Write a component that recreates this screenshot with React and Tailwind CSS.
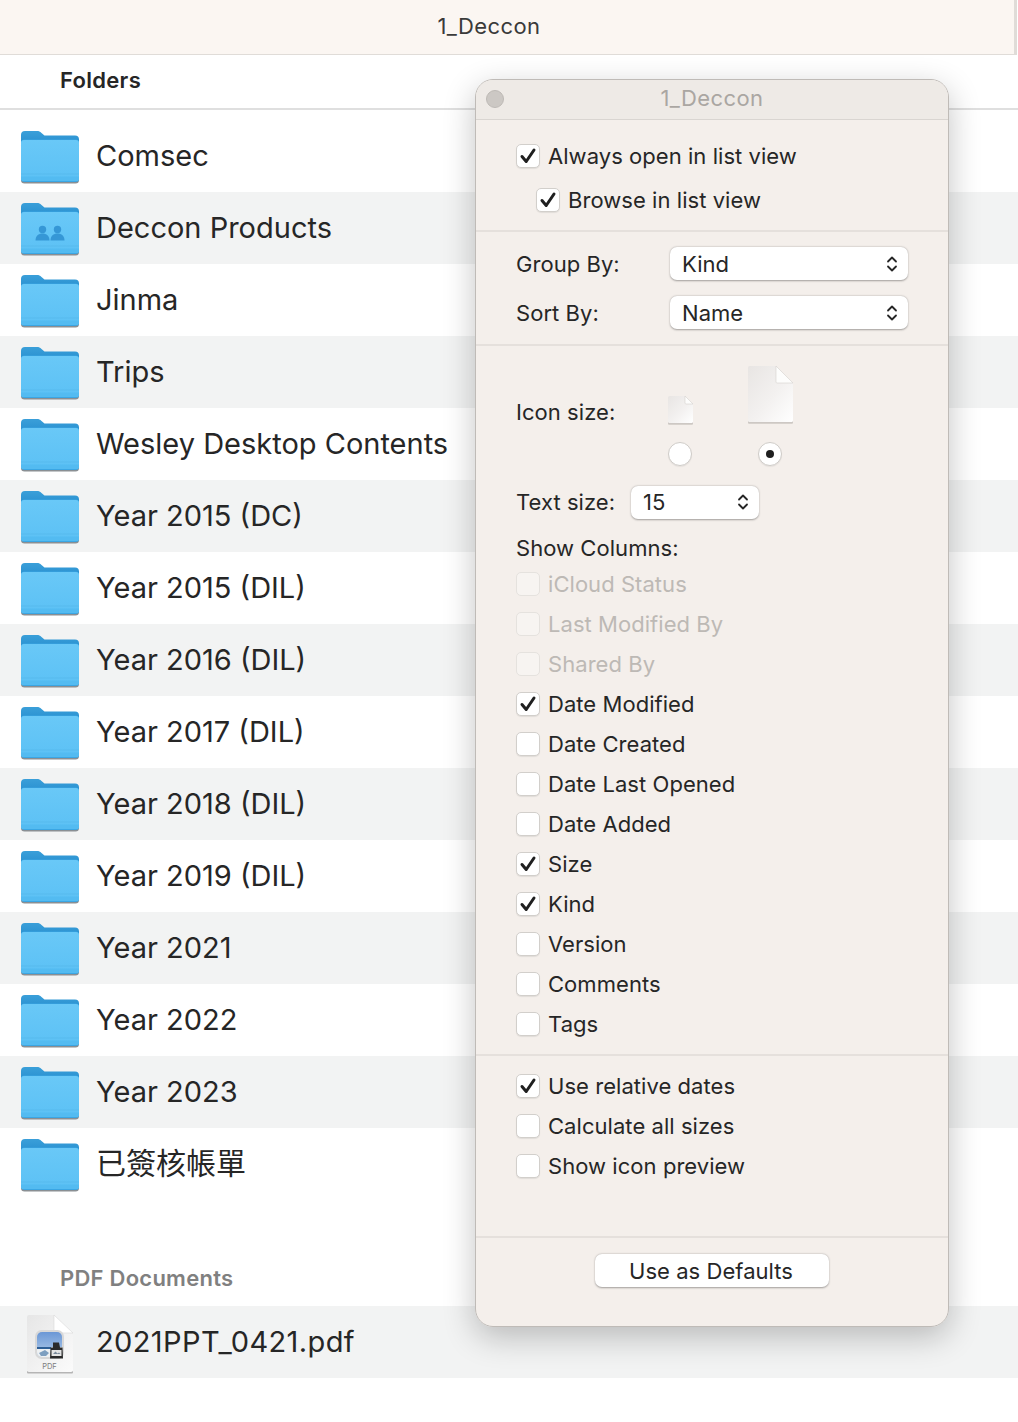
const FONT = "font-['Inter','Noto_Sans_CJK_TC',sans-serif]";

const folders = [
  "Comsec",
  "Deccon Products",
  "Jinma",
  "Trips",
  "Wesley Desktop Contents",
  "Year 2015 (DC)",
  "Year 2015 (DIL)",
  "Year 2016 (DIL)",
  "Year 2017 (DIL)",
  "Year 2018 (DIL)",
  "Year 2019 (DIL)",
  "Year 2021",
  "Year 2022",
  "Year 2023",
  "已簽核帳單",
];

const columns = [
  { label: "iCloud Status", disabled: true },
  { label: "Last Modified By", disabled: true },
  { label: "Shared By", disabled: true },
  { label: "Date Modified", checked: true },
  { label: "Date Created" },
  { label: "Date Last Opened" },
  { label: "Date Added" },
  { label: "Size", checked: true },
  { label: "Kind", checked: true },
  { label: "Version" },
  { label: "Comments" },
  { label: "Tags" },
];

function FolderIcon({ shared }) {
  return (
    <svg width="60" height="56" viewBox="0 0 60 56" className="shrink-0">
      <defs>
        <linearGradient id="foldertab" x1="0" y1="0" x2="0" y2="1">
          <stop offset="0" stopColor="#3a9fd9" />
          <stop offset="1" stopColor="#2189cc" />
        </linearGradient>
        <linearGradient id="folderfront" x1="0" y1="0" x2="0" y2="1">
          <stop offset="0" stopColor="#69c8f7" />
          <stop offset="1" stopColor="#5cc1f5" />
        </linearGradient>
      </defs>
      <path d="M1 5a4 4 0 0 1 4-4h12c2 0 3 .6 4.500 2l3 2.500h30.500a4 4 0 0 1 4 4V20H1z" fill="url(#foldertab)" />
      <rect x="1" y="12" width="58" height="41.500" rx="3.500" fill="#8a8f93" />
      <rect x="1" y="9.500" width="58" height="42.500" rx="3.500" fill="#3aa6e4" />
      <path d="M1 13a3 3 0 0 1 3-3h52a3 3 0 0 1 3 3v35.500a2.500 2.500 0 0 1-2.500 2.500h-53A2.500 2.500 0 0 1 1 48.500z" fill="url(#folderfront)" />
      <rect x="1" y="43.500" width="58" height="1" fill="#52b6ea" opacity="0.5" />
      <path d="M1 46.500h58v2a2.500 2.500 0 0 1-2.500 2.500h-53A2.500 2.500 0 0 1 1 48.500z" fill="#53bbf1" />
      {shared && (
        <g fill="#3597d6">
          <circle cx="22.500" cy="27.500" r="3.700" />
          <circle cx="37.500" cy="27.500" r="3.700" />
          <path d="M15.500 38.500c0-4.500 3-7 7-7s7 2.500 7 7z" />
          <path d="M30.500 38.500c0-4.500 3-7 7-7s7 2.500 7 7z" />
        </g>
      )}
    </svg>
  );
}

function DocShape({ w, h, fold, id }) {
  return (
    <svg width={w + 2} height={h + 3} viewBox={`-1 0 ${w + 2} ${h + 3}`} className="block">
      <defs>
        <linearGradient id={id} x1="0" y1="0" x2="1" y2="1">
          <stop offset="0" stopColor="#e8e5e3" />
          <stop offset="0.55" stopColor="#f3f1f0" />
          <stop offset="1" stopColor="#ffffff" />
        </linearGradient>
      </defs>
      <path d={`M0 ${h - 1}h${w}v1.800a1 1 0 0 1-1 1H1a1 1 0 0 1-1-1z`} fill="#bcb8b4" opacity="0.7" />
      <path
        d={`M1.500 0H${w - fold}L${w} ${fold}V${h - 1.500}a1.500 1.500 0 0 1-1.500 1.500H1.500A1.500 1.500 0 0 1 0 ${h - 1.500}V1.500A1.500 1.500 0 0 1 1.500 0z`}
        fill={`url(#${id})`}
      />
      <path d={`M${w - fold} 0V${fold - 1}a1 1 0 0 0 1 1H${w}z`} fill="#fdfdfc" stroke="#cfcbc7" strokeWidth="0.5" />
    </svg>
  );
}

function PdfIcon() {
  return (
    <svg width="48" height="60" viewBox="0 0 48 60" className="shrink-0">
      <defs>
        <linearGradient id="pdfpage" x1="0" y1="0" x2="1" y2="1">
          <stop offset="0" stopColor="#e6e6e6" />
          <stop offset="1" stopColor="#fbfbfb" />
        </linearGradient>
        <linearGradient id="pdfsky" x1="0" y1="0" x2="0" y2="1">
          <stop offset="0" stopColor="#6a97d6" />
          <stop offset="1" stopColor="#b4cde9" />
        </linearGradient>
      </defs>
      <path d="M1 57h46v1.500a1 1 0 0 1-1 1H2a1 1 0 0 1-1-1z" fill="#b5b5b5" />
      <path d="M3 1h25l19 19v36a2 2 0 0 1-2 2H3a2 2 0 0 1-2-2V3a2 2 0 0 1 2-2z" fill="url(#pdfpage)" />
      <path d="M28 1v15a3 3 0 0 0 3 3h16z" fill="#ffffff" stroke="#d8d8d8" strokeWidth="0.6" />
      <rect x="9" y="16" width="29" height="29" rx="6.500" fill="#d8d8d8" />
      <rect x="11" y="18" width="25" height="25" rx="5" fill="url(#pdfsky)" />
      <path d="M11 33h25v5a5 5 0 0 1-5 5H16a5 5 0 0 1-5-5z" fill="#eef1f3" />
      <path d="M11 33h14v2H11z" fill="#2e5f96" />
      <path d="M13 39l6-3 4 3-3 3h-5z" fill="#7d9fc0" />
      <path d="M27 28.500h6l1 5h2.500l.5 11H24l.5-11H27z" fill="#2a2a2a" />
      <rect x="25.500" y="36" width="10" height="6" fill="#e4e4e4" />
      <path d="M27 40l2.500-2.500 2 2 1.500-1 1.500 1.500z" fill="#7a8a9a" />
      <text x="23.500" y="54.500" textAnchor="middle" fontSize="7.500" fill="#7c7c7c" fontFamily="Inter, sans-serif">PDF</text>
    </svg>
  );
}

function Row({ striped, icon, name, textClass }) {
  return (
    <div className={`flex h-[72px] items-center ${striped ? "bg-[#f2f3f3]" : ""}`}>
      <div className="flex w-[96px] justify-center pl-[4px] pt-[3px]">{icon}</div>
      <span className={`whitespace-nowrap pb-[2px] leading-none text-[#262626] ${textClass}`}>{name}</span>
    </div>
  );
}

function Checkbox({ label, checked, disabled }) {
  return (
    <div className="flex h-10 items-center gap-2">
      <div
        className={`flex h-6 w-6 items-center justify-center rounded-[5px] border ${
          disabled ? "border-[#e5e2de] bg-[#f7f4f1]" : "border-[#d2cfcb] bg-white shadow-[0_1px_1px_rgba(0,0,0,0.08)]"
        }`}
      >
        {checked && (
          <svg width="18" height="18" viewBox="0 0 18 18">
            <path d="M3 9.500l4.200 5L15 3" fill="none" stroke="#1f1f1f" strokeWidth="3" strokeLinecap="round" strokeLinejoin="round" />
          </svg>
        )}
      </div>
      <span className={`whitespace-nowrap text-[22px] leading-7 tracking-[0.05px] ${disabled ? "text-[#bdb9b5]" : "text-[#262626]"}`}>{label}</span>
    </div>
  );
}

function Chevrons() {
  return (
    <svg width="12" height="18" viewBox="0 0 12 18">
      <path d="M2 6.500L6 2.500l4 4M2 11.500l4 4 4-4" fill="none" stroke="#262626" strokeWidth="1.800" strokeLinecap="round" strokeLinejoin="round" />
    </svg>
  );
}

function Select({ value, className }) {
  return (
    <div className={`flex h-[33px] items-center justify-between rounded-[7px] bg-white pl-[12px] pr-[10px] text-[#262626] shadow-[0_0.5px_2px_rgba(0,0,0,0.35)] ${className}`}>
      <span>{value}</span>
      <Chevrons />
    </div>
  );
}

function Radio({ selected }) {
  return (
    <div className="flex h-6 w-6 items-center justify-center rounded-full border border-[#cfccc8] bg-white shadow-[0_1px_1px_rgba(0,0,0,0.06)]">
      {selected && <div className="h-2 w-2 rounded-full bg-[#1f1f1f]" />}
    </div>
  );
}

function InfoPanel() {
  return (
    <div className="absolute left-[475px] top-[79px] h-[1248px] w-[474px] overflow-hidden rounded-[18px] border border-[#bfbbb7] bg-[#f4efeb] text-[#262626]">
      <div className="relative flex h-[40px] items-center justify-center border-b border-[#d9d5d1] bg-[#eeeae6] pb-[4px]">
        <div className="absolute left-[10px] top-[10px] h-[18px] w-[18px] rounded-full border border-[#bdb9b5] bg-[#ccc8c4]" />
        <span className="text-[22px] leading-7 tracking-[0.4px] text-[#aaa6a2]">1_Deccon</span>
      </div>

      <div className="pb-[10px] pl-[40px] pt-4">
        <Checkbox label="Always open in list view" checked />
        <div className="mt-1 pl-5">
          <Checkbox label="Browse in list view" checked />
        </div>
      </div>

      <div className="flex flex-col gap-4 border-t-2 border-[#e5e0dc] pb-[15px] pl-[40px] pr-[40px] pt-[15px] text-[22px] leading-7 tracking-[0.05px]">
        <div className="flex items-center justify-between">
          <span>Group By:</span>
          <Select value="Kind" className="w-[238px]" />
        </div>
        <div className="flex items-center justify-between">
          <span>Sort By:</span>
          <Select value="Name" className="w-[238px]" />
        </div>
      </div>

      <div className="border-t-2 border-[#e5e0dc] pb-[10px] pl-[40px] pt-5 text-[22px] leading-7 tracking-[0.05px]">
        <div className="grid grid-cols-[119px_90px_90px] grid-rows-[60px_24px] gap-y-4">
          <span className="self-end">Icon size:</span>
          <div className="flex items-end justify-center">
            <DocShape w={25} h={27} fold={8} id="docsmall" />
          </div>
          <div className="flex items-end justify-center pb-[1px]">
            <DocShape w={45} h={56} fold={17} id="doclarge" />
          </div>
          <div />
          <div className="flex justify-center">
            <Radio />
          </div>
          <div className="flex justify-center">
            <Radio selected />
          </div>
        </div>

        <div className="mt-5 flex h-8 items-center">
          <span className="w-[115px]">Text size:</span>
          <Select value="15" className="w-[128px]" />
        </div>
        <div className="mt-4 h-7">Show Columns:</div>
        <div className="mt-[2px]">
          {columns.map((c) => (
            <Checkbox key={c.label} {...c} />
          ))}
        </div>
      </div>

      <div className="border-t-2 border-[#e5e0dc] pb-[50px] pl-[40px] pt-[10px]">
        <Checkbox label="Use relative dates" checked />
        <Checkbox label="Calculate all sizes" />
        <Checkbox label="Show icon preview" />
      </div>

      <div className="flex justify-center border-t-2 border-[#e5e0dc] pt-4">
        <button className="h-[33px] w-[234px] rounded-[7px] bg-white pr-[2px] text-[22px] leading-7 tracking-[0.05px] text-[#262626] shadow-[0_0.5px_2px_rgba(0,0,0,0.35)]">
          Use as Defaults
        </button>
      </div>
    </div>
  );
}

export default function App() {
  return (
    <div className={`relative h-[1422px] w-[1018px] overflow-hidden bg-white ${FONT}`}>
      <div className="mr-px flex h-[55px] items-center justify-center border-b border-r-[3px] border-[#e0dcd8] bg-[#fbf6f2] pb-[1px] pr-[36px] text-[22px] tracking-[0.4px] text-[#3a3a3a]">
        1_Deccon
      </div>
      <div className="flex h-[55px] items-center border-b-2 border-[#dfdfdf] pb-[2px] pl-[60px] text-[22px] font-semibold tracking-[0.3px] text-[#262626]">
        Folders
      </div>
      <div className="pt-[10px]">
        {folders.map((name, i) => (
          <Row
            key={name}
            name={name}
            striped={i % 2 === 1}
            textClass={i === folders.length - 1 ? "text-[30px]" : "text-[29px]"}
            icon={<FolderIcon shared={name === "Deccon Products"} />}
          />
        ))}
      </div>
      <div className="flex h-[106px] items-end pb-[11px] pl-[60px] text-[22px] font-semibold tracking-[0.25px] text-[#808080]">
        PDF Documents
      </div>
      <Row striped icon={<PdfIcon />} name="2021PPT_0421.pdf" textClass="text-[29px] tracking-[0.4px]" />

      <div className="absolute left-[475px] top-[79px] h-[1248px] w-[474px] rounded-[18px] shadow-[0_10px_32px_rgba(0,0,0,0.24)]" />
      <InfoPanel />
    </div>
  );
}
